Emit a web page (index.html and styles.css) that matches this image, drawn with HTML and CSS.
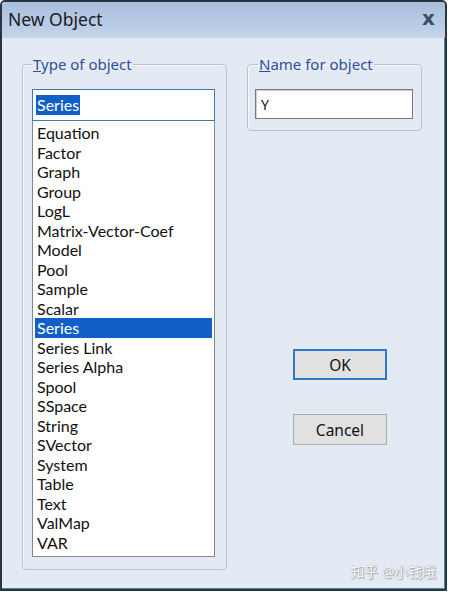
FILE: index.html
```html
<!DOCTYPE html>
<html>
<head>
<meta charset="utf-8">
<link rel="stylesheet" href="styles.css">
</head>
<body>
<div class="window">
  <div class="titlebar">
    <span class="title">New Object</span>
    <span class="close">x</span>
  </div>
  <div class="content">
    <fieldset class="group group-type">
      <legend><u>T</u>ype of object</legend>
      <div class="combo"><span class="sel">Series</span></div>
      <ul class="list">
        <li>Equation</li>
        <li>Factor</li>
        <li>Graph</li>
        <li>Group</li>
        <li>LogL</li>
        <li>Matrix-Vector-Coef</li>
        <li>Model</li>
        <li>Pool</li>
        <li>Sample</li>
        <li>Scalar</li>
        <li class="active">Series</li>
        <li>Series Link</li>
        <li>Series Alpha</li>
        <li>Spool</li>
        <li>SSpace</li>
        <li>String</li>
        <li>SVector</li>
        <li>System</li>
        <li>Table</li>
        <li>Text</li>
        <li>ValMap</li>
        <li>VAR</li>
      </ul>
    </fieldset>
    <div class="right">
      <fieldset class="group group-name">
        <legend><u>N</u>ame for object</legend>
        <div class="textbox">Y</div>
      </fieldset>
      <div class="buttons">
        <button class="btn btn-ok">OK</button>
        <button class="btn">Cancel</button>
      </div>
    </div>
    <div class="watermark">知乎 @小钱哦</div>
  </div>
</div>
</body>
</html>
```

FILE: styles.css
```css
html, body {
  margin: 0;
  padding: 0;
  background: #ffffff;
}
body {
  width: 449px;
  height: 593px;
  font-family: "Noto Sans", "Noto Sans CJK SC", sans-serif;
}
.window {
  position: relative;
  width: 443px;
  height: 587px;
  border: 2px solid #2b3440;
  border-radius: 5px 5px 0 0;
  box-shadow: inset -1px -1px 0 #3a8f9a;
  background: #e3eaf4;
  display: flex;
  flex-direction: column;
  overflow: hidden;
}
.titlebar {
  height: 36px;
  flex: none;
  background: linear-gradient(#a7bedc, #c4d5ec);
  display: flex;
  align-items: center;
  justify-content: space-between;
  padding: 0 10px 0 6px;
}
.title {
  font-size: 17.5px;
  color: #1b1b1b;
  margin-top: -2px;
}
.close {
  font-family: "DejaVu Sans", sans-serif;
  font-weight: bold;
  font-size: 20px;
  color: #3d4d60;
  margin-top: -4px;
}
.content {
  flex: 1;
  display: flex;
  align-items: flex-start;
  padding: 17px 0 0 20px;
  position: relative;
}
.group {
  margin: 0;
  border: 1px solid #b9c3d0;
  border-radius: 4px;
  box-shadow: inset 1px 1px 0 #f6f8fb;
}
.group legend {
  font-size: 15px;
  color: #2c4f9e;
  padding: 0 1px;
  margin-left: 0;
  line-height: 18px;
}
.group legend u {
  text-decoration-thickness: 1px;
}
.group-type {
  width: 205px;
  box-sizing: border-box;
  padding: 16px 0 12px 9px;
}
.combo {
  border: 1px solid #3d7ab5;
  background: #ffffff;
  display: flex;
  align-items: center;
  padding-left: 3px;
  box-sizing: border-box;
  width: 183px;
  height: 32px;
}
.combo .sel {
  background: #1160c8;
  color: #ffffff;
  font-family: "Lato", "Noto Sans", sans-serif;
  font-size: 16px;
  line-height: 20px;
  padding: 0 1px 0 1px;
}
.list {
  list-style: none;
  margin: 0;
  width: 183px;
  height: 436px;
  box-sizing: border-box;
  border: 1px solid #828790;
  border-top: none;
  background: #ffffff;
  padding: 2px 2px 0 2px;
}
.list li {
  font-family: "Lato", "Noto Sans", sans-serif;
  font-size: 16px;
  line-height: 19.5px;
  height: 19.5px;
  padding-left: 2px;
  color: #111111;
}
.list li.active {
  background: #1160c8;
  color: #ffffff;
}
.right {
  margin-left: 20px;
  display: flex;
  flex-direction: column;
}
.group-name {
  width: 175px;
  box-sizing: border-box;
  padding: 16px 0 11px 7px;
}
.group-name legend {
  margin-left: 3px;
}
.textbox {
  width: 158px;
  height: 30px;
  box-sizing: border-box;
  border: 1px solid #7a7a7a;
  box-shadow: inset 1px 1px 0 #d0d0d0;
  background: #ffffff;
  font-size: 14px;
  padding-left: 5px;
  display: flex;
  align-items: center;
  color: #111111;
}
.buttons {
  display: flex;
  flex-direction: column;
  gap: 34px;
  margin: 218px 0 0 46px;
}
.btn {
  width: 94px;
  height: 31px;
  box-sizing: border-box;
  border: 1px solid #adadad;
  background: #e1e1e1;
  font-family: "Noto Sans", sans-serif;
  font-size: 15.5px;
  color: #111111;
  padding: 0;
}
.btn-ok {
  border: 2px solid #2f7ac6;
}
.watermark {
  position: absolute;
  right: 9px;
  bottom: 8px;
  font-size: 13.5px;
  color: #ffffff;
  text-shadow: 0 0 1px #8a8f96, 1px 1px 1px #9aa0a8;
  letter-spacing: 0.3px;
}
```
